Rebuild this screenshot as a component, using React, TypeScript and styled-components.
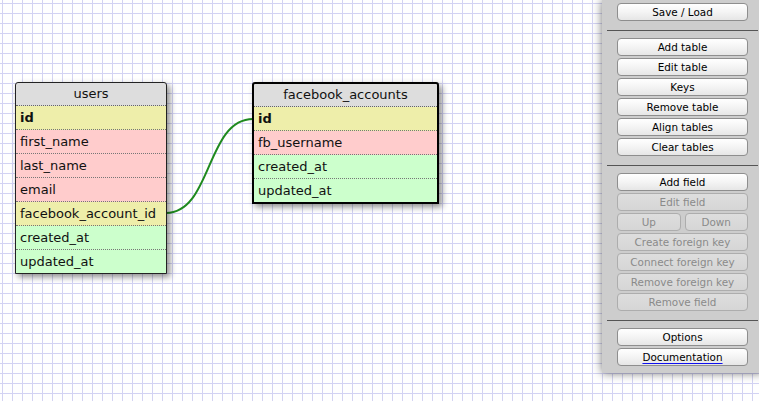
import React from "react";
import styled, { createGlobalStyle } from "styled-components";

const GlobalStyle = createGlobalStyle`
  html, body {
    margin: 0;
    padding: 0;
    overflow: hidden;
  }
`;

type FieldKind = "key" | "plain" | "meta" | "fk";

interface Field {
  name: string;
  kind: FieldKind;
}

interface TableData {
  name: string;
  x: number;
  y: number;
  width: number;
  selected?: boolean;
  fields: Field[];
}

const tables: TableData[] = [
  {
    name: "users",
    x: 15,
    y: 82,
    width: 152,
    fields: [
      { name: "id", kind: "key" },
      { name: "first_name", kind: "plain" },
      { name: "last_name", kind: "plain" },
      { name: "email", kind: "plain" },
      { name: "facebook_account_id", kind: "fk" },
      { name: "created_at", kind: "meta" },
      { name: "updated_at", kind: "meta" },
    ],
  },
  {
    name: "facebook_accounts",
    x: 252,
    y: 82,
    width: 187,
    selected: true,
    fields: [
      { name: "id", kind: "key" },
      { name: "fb_username", kind: "plain" },
      { name: "created_at", kind: "meta" },
      { name: "updated_at", kind: "meta" },
    ],
  },
];

const rowColors: Record<FieldKind, string> = {
  key: "#eeeeaa",
  fk: "#eeeeaa",
  plain: "#ffcccc",
  meta: "#ccffcc",
};

const Canvas = styled.div`
  position: relative;
  width: 759px;
  height: 401px;
  overflow: hidden;
  background-color: #ffffff;
  background-image: linear-gradient(to right, #d3d3f3 1px, transparent 1px),
    linear-gradient(to bottom, #d3d3f3 1px, transparent 1px);
  background-size: 10px 10px;
  background-position: 2px 3px;
  font-family: "DejaVu Sans", Verdana, sans-serif;
`;

const Links = styled.svg`
  position: absolute;
  left: 0;
  top: 0;
  width: 759px;
  height: 401px;
  pointer-events: none;
`;

const TableBox = styled.div<{ $selected?: boolean }>`
  position: absolute;
  box-sizing: border-box;
  border: ${(p) => (p.$selected ? "2px solid #000" : "1px solid #222")};
  border-radius: 3px 3px 0 0;
  background: #dddddd;
  box-shadow: 3px 3px 6px rgba(0, 0, 0, 0.45);
  overflow: hidden;
  z-index: 1;
`;

const TableTitle = styled.div`
  height: 22px;
  line-height: 22px;
  text-align: center;
  font-size: 13px;
  color: #111;
  border-bottom: 1px dotted #666;
`;

const FieldRow = styled.div<{ $kind: FieldKind }>`
  height: 23px;
  line-height: 23px;
  padding-left: 4px;
  font-size: 13px;
  color: #111;
  white-space: nowrap;
  font-weight: ${(p) => (p.$kind === "key" ? "bold" : "normal")};
  background: ${(p) => rowColors[p.$kind]};
  border-bottom: 1px dotted #777;

  &:last-child {
    border-bottom: none;
  }
`;

const Panel = styled.div`
  position: absolute;
  top: 0;
  left: 602px;
  width: 161px;
  box-sizing: border-box;
  padding: 3px 15px 7px 15px;
  background: #cdcdcd;
  box-shadow: 0 0 9px rgba(0, 0, 0, 0.55);
  display: flex;
  flex-direction: column;
  gap: 2px;
  z-index: 2;
`;

const Divider = styled.div`
  height: 1px;
  background: #555;
  margin: 7px -10px 5px -10px;
`;

const ButtonRow = styled.div`
  display: flex;
  gap: 4px;
`;

const PanelButton = styled.button<{ $link?: boolean }>`
  flex: 1;
  height: 18px;
  width: 131px;
  box-sizing: border-box;
  padding: 0;
  margin: 0;
  border: 1px solid #8e8e8e;
  border-radius: 4px;
  background: linear-gradient(to bottom, #ffffff 0%, #f4f4f4 50%, #e6e6e6 100%);
  font-family: "DejaVu Sans", Verdana, sans-serif;
  font-size: 10.4px;
  line-height: 16px;
  color: #000;
  text-decoration: ${(p) => (p.$link ? "underline" : "none")};
  text-decoration-color: #1010ee;
  text-underline-offset: 2px;

  &:disabled {
    color: #8a8a8a;
    border-color: #adadad;
    background: linear-gradient(to bottom, #dedede 0%, #d6d6d6 100%);
  }
`;

const SmallButton = styled(PanelButton)`
  width: auto;
`;

const Table: React.FC<{ table: TableData }> = ({ table }) => (
  <TableBox
    $selected={table.selected}
    style={{ left: table.x, top: table.y, width: table.width }}
  >
    <TableTitle>{table.name}</TableTitle>
    {table.fields.map((f) => (
      <FieldRow key={f.name} $kind={f.kind}>
        {f.name}
      </FieldRow>
    ))}
  </TableBox>
);

export default function App() {
  return (
    <Canvas>
      <GlobalStyle />
      <Links viewBox="0 0 759 401">
        <path
          d="M166 213 C 212 213, 206 119, 253 119"
          fill="none"
          stroke="#1f8a1f"
          strokeWidth="2"
        />
      </Links>
      {tables.map((t) => (
        <Table key={t.name} table={t} />
      ))}
      <Panel>
        <PanelButton>Save / Load</PanelButton>
        <Divider />
        <PanelButton>Add table</PanelButton>
        <PanelButton>Edit table</PanelButton>
        <PanelButton>Keys</PanelButton>
        <PanelButton>Remove table</PanelButton>
        <PanelButton>Align tables</PanelButton>
        <PanelButton>Clear tables</PanelButton>
        <Divider />
        <PanelButton>Add field</PanelButton>
        <PanelButton disabled>Edit field</PanelButton>
        <ButtonRow>
          <SmallButton disabled>Up</SmallButton>
          <SmallButton disabled>Down</SmallButton>
        </ButtonRow>
        <PanelButton disabled>Create foreign key</PanelButton>
        <PanelButton disabled>Connect foreign key</PanelButton>
        <PanelButton disabled>Remove foreign key</PanelButton>
        <PanelButton disabled>Remove field</PanelButton>
        <Divider />
        <PanelButton>Options</PanelButton>
        <PanelButton $link>Documentation</PanelButton>
      </Panel>
    </Canvas>
  );
}
